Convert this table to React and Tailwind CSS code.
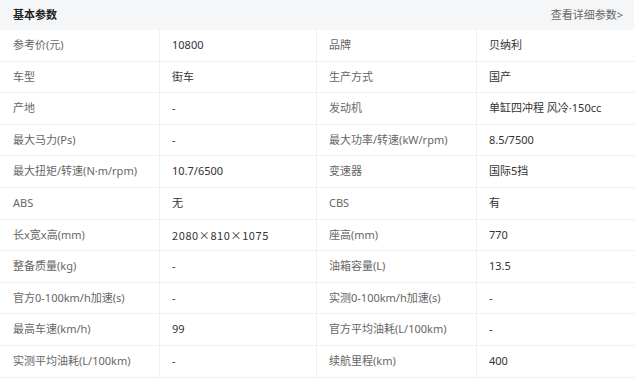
const rows = [
  ['参考价(元)', '10800', '品牌', '贝纳利'],
  ['车型', '街车', '生产方式', '国产'],
  ['产地', '-', '发动机', '单缸四冲程 风冷·150cc'],
  ['最大马力(Ps)', '-', '最大功率/转速(kW/rpm)', '8.5/7500'],
  ['最大扭矩/转速(N·m/rpm)', '10.7/6500', '变速器', '国际5挡'],
  ['ABS', '无', 'CBS', '有'],
  ['长x宽x高(mm)', '2080×810×1075', '座高(mm)', '770'],
  ['整备质量(kg)', '-', '油箱容量(L)', '13.5'],
  ['官方0-100km/h加速(s)', '-', '实测0-100km/h加速(s)', '-'],
  ['最高车速(km/h)', '99', '官方平均油耗(L/100km)', '-'],
  ['实测平均油耗(L/100km)', '-', '续航里程(km)', '400'],
];

const cjk = { fontFamily: '"Noto Sans CJK SC", sans-serif' };

export default function App() {
  return (
    <div
      className="w-[640px] h-[381px] bg-white overflow-hidden"
      style={{ fontFamily: '"Noto Sans", "Noto Sans CJK SC", sans-serif' }}
    >
      <div className="w-[634px] h-[30px] bg-[#f5f6f8] flex items-center justify-between pl-[13px] pr-[11px]">
        <span className="text-[11px] font-bold text-[#222]">基本参数</span>
        <span className="text-[11px] text-[#666]">查看详细参数&gt;</span>
      </div>
      <div className="w-[635px]">
        {rows.map((r, i) => (
          <div
            key={i}
            className="grid grid-cols-[160px_157px_160px_158px] h-[31.6px] border-b border-[#eef0f2] text-[11px]"
          >
            <div className="flex items-center pl-[13px] text-[#666] border-r border-[#eef0f2]">{r[0]}</div>
            <div
              className={
                r[1].includes('×')
                  ? 'flex items-center pl-[12px] text-[#333] border-r border-[#eef0f2] tracking-[0.6px]'
                  : 'flex items-center pl-[12px] text-[#333] border-r border-[#eef0f2]'
              }
              style={r[1].includes('×') ? cjk : undefined}
            >
              {r[1]}
            </div>
            <div className="flex items-center pl-[12px] text-[#666] border-r border-[#eef0f2]">{r[2]}</div>
            <div className="flex items-center pl-[12px] text-[#333]">{r[3]}</div>
          </div>
        ))}
      </div>
    </div>
  );
}
